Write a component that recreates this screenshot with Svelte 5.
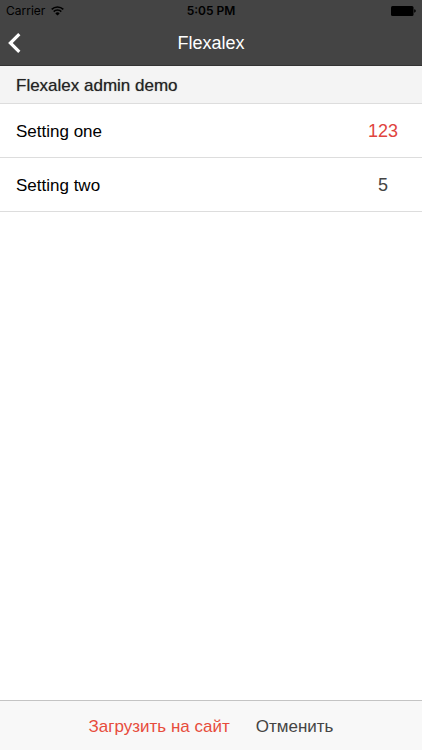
<script>
  let settings = $state([
    { id: 'setting-one', label: 'Setting one', value: '123', changed: true },
    { id: 'setting-two', label: 'Setting two', value: '5', changed: false }
  ]);
</script>

<div class="screen">
  <header>
    <div class="status">
      <div class="carrier">
        <span>Carrier</span>
        <svg width="13" height="10" viewBox="0 0 13 10" aria-hidden="true">
          <path d="M0.7 3.4A8.2 8.2 0 0 1 12.3 3.4M2.7 5.6A5.4 5.4 0 0 1 10.3 5.6" fill="none" stroke="#000" stroke-width="1.6" />
          <path d="M6.5 9.6L4.3 7.4A3.1 3.1 0 0 1 8.7 7.4Z" fill="#000" />
        </svg>
      </div>
      <time>5:05 PM</time>
      <div class="battery">
        <svg width="25" height="10" viewBox="0 0 25 10" aria-hidden="true">
          <rect x="0" y="0" width="22.5" height="10" rx="1.5" fill="#000" />
          <path d="M23.2 3.3Q24.8 3.6 24.8 5T23.2 6.7Z" fill="#000" />
        </svg>
      </div>
    </div>
    <nav>
      <button class="back" type="button" aria-label="Back">
        <svg width="13" height="20" viewBox="0 0 13 20" aria-hidden="true">
          <path d="M11.3 1.2L2.4 10L11.3 18.8" fill="none" stroke="#fff" stroke-width="3.2" />
        </svg>
      </button>
      <h1>Flexalex</h1>
    </nav>
  </header>

  <main>
    <h2>Flexalex admin demo</h2>
    {#each settings as item (item.id)}
      <div class="row">
        <label for={item.id}>{item.label}</label>
        <input id={item.id} type="text" inputmode="numeric" class:changed={item.changed} bind:value={item.value} />
      </div>
    {/each}
  </main>

  <footer>
    <button class="upload" type="button">Загрузить на сайт</button>
    <button type="button">Отменить</button>
  </footer>
</div>

<style>
  :global(body) {
    margin: 0;
  }
  .screen {
    display: flex;
    flex-direction: column;
    min-height: 100vh;
    background: #fff;
    color: #000;
    font: 17px/20px "Liberation Sans", Arial, sans-serif;
  }
  header {
    background: #444;
    border-bottom: 1px solid #333;
  }
  .status {
    display: grid;
    grid-template-columns: 1fr auto 1fr;
    align-items: center;
    height: 21px;
    padding: 0 6px;
    font: 12px/20px Inter, sans-serif;
  }
  .carrier {
    display: flex;
    align-items: center;
    gap: 6px;
  }
  time {
    font-weight: 600;
  }
  .battery {
    display: flex;
    justify-content: flex-end;
  }
  .battery svg {
    display: block;
  }
  nav {
    display: grid;
    grid-template-columns: 40px 1fr 40px;
    align-items: center;
    height: 44px;
  }
  button {
    border: 0;
    padding: 0;
    background: none;
    color: #444;
    font: inherit;
    cursor: pointer;
  }
  .back {
    display: flex;
    align-items: center;
    height: 44px;
    padding-left: 8px;
  }
  h1 {
    margin: 0;
    color: #fff;
    text-align: center;
    font-size: 18px;
    font-weight: 500;
  }
  main {
    flex: 1;
  }
  h2 {
    margin: 0;
    padding: 10px 16px 7px;
    border-bottom: 1px solid #ddd;
    background: #f4f4f4;
    color: #222;
    font-size: 17px;
    font-weight: 500;
    text-shadow: 0 0 1px #2228;
  }
  .row {
    display: flex;
    align-items: center;
    justify-content: space-between;
    height: 51px;
    padding: 2px 8px 0 16px;
    border-bottom: 1px solid #ddd;
  }
  input {
    width: 62px;
    height: 40px;
    border: 0;
    padding: 0;
    background: none;
    color: #444;
    font: inherit;
    font-size: 18px;
    text-align: center;
    outline: none;
  }
  input.changed {
    color: #e0443e;
  }
  footer {
    display: flex;
    align-items: center;
    justify-content: center;
    gap: 26px;
    height: 47px;
    padding-top: 2px;
    border-top: 1px solid #c4c4c4;
    background: #f8f8f8;
  }
  .upload {
    color: #e74c3c;
  }
</style>
